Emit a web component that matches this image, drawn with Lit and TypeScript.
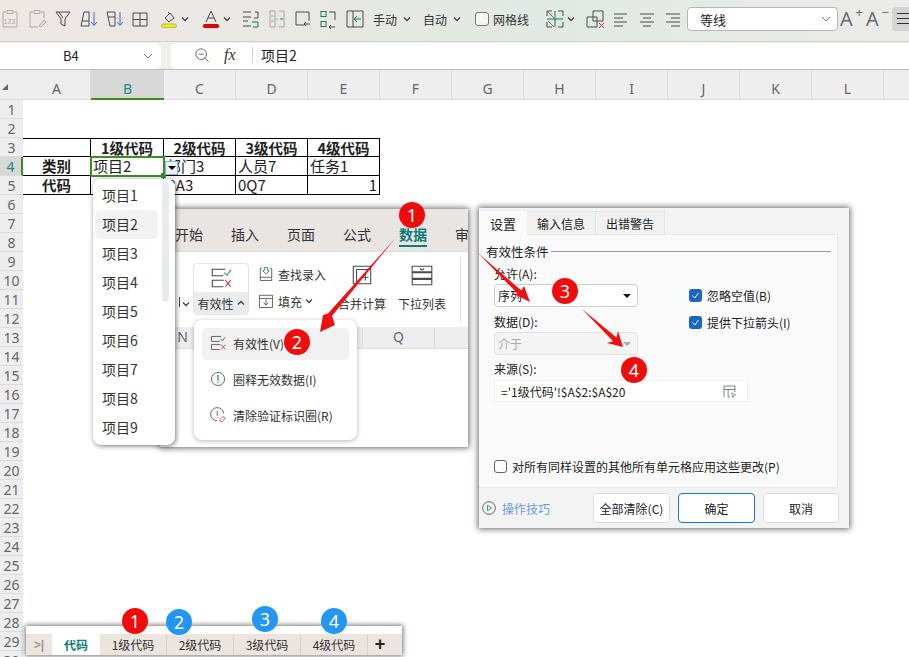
import { LitElement, html, css, svg } from "lit";
import { customElement } from "lit/decorators.js";

const ic = (body: unknown, size = 22) => html`<svg class="ic" width=${size} height=${size} viewBox="0 0 22 22" fill="none" stroke="#4a4a4a" stroke-width="1">${body}</svg>`;
const chev = html`<svg class="ic" width="8" height="6" viewBox="0 0 8 6" fill="none" stroke="#444" stroke-width="1.3"><path d="M1 1.5 4 4.5 7 1.5"/></svg>`;

const G = "#0f7d5f";
const tools: { c: number; w: number; t: unknown }[] = [
  { c: 10, w: 16, t: ic(svg`<g stroke="#aaa"><path d="M7 4H4v15h14V4h-3"/><path d="M8 2.5h6v3H8z"/><text x="4.5" y="16" font-size="7" fill="#aaa" stroke="none" font-family="Liberation Sans">123</text></g>`) },
  { c: 37, w: 16, t: ic(svg`<g stroke="#aaa"><path d="M7 4H4v15h8M15 4h3v6"/><path d="M8 2.5h6v3H8z"/><path d="M13 18l5-6 2 2-5 5z"/></g>`) },
  { c: 63, w: 16, t: ic(svg`<path d="M4 4h14l-5 7v7l-4-2v-5zM7 4l4 6"/>`) },
  { c: 89, w: 18, t: ic(svg`<path d="M6 4h5v14H3zM4 13h7"/><path d="M16 4v13M13 14l3 3.5 3-3.5" stroke="#2a6fe0"/>`) },
  { c: 115, w: 18, t: ic(svg`<path d="M3 4h8v14H6zM4 9h7"/><path d="M16 4v13M13 14l3 3.5 3-3.5" stroke="#2a6fe0"/>`) },
  { c: 140, w: 16, t: ic(svg`<path d="M4 5h14v13H4zM11 5v13M4 11.5h14"/>`) },
  { c: 169, w: 16, t: ic(svg`<path d="M7 10l5-5 4 5-5 4zM10 4l2 2"/><rect x="3.5" y="16" width="15" height="3.5" rx="1.5" fill="#f6ee00" stroke="#b8b85a"/>`) },
  { c: 185, w: 8, t: chev },
  { c: 211, w: 16, t: ic(svg`<path d="M6 14 11 3l5 11M8 10h6"/><rect x="3" y="16" width="16" height="4" rx="1.5" fill="#e00000" stroke="none"/>`) },
  { c: 227, w: 8, t: chev },
  { c: 250, w: 16, t: ic(svg`<path d="M4 4h8M4 9h8M4 18h8"/><path d="M16 4h3v6h-4M4 13h5" /><path d="M13 14h6v5h-5" stroke="${G}"/>`) },
  { c: 277, w: 16, t: ic(svg`<g stroke="#aaa"><path d="M4 3h5v16H4zM13 3h5v16h-5"/><path d="M5 8h3M5 13h3M10 11h2"/></g><path d="M14 11h3" stroke="${G}"/>`) },
  { c: 303, w: 16, t: ic(svg`<path d="M17 13V4H4v13h8"/><path d="M18 16h-6m2-2-2 2 2 2"/>`) },
  { c: 328, w: 16, t: ic(svg`<rect x="4" y="3.5" width="5" height="5" stroke="${G}"/><rect x="4" y="13.5" width="5" height="5" stroke="${G}"/><path d="M12 4h6v8M18 19h-6m2-2-2 2 2 2"/>`) },
  { c: 355, w: 16, t: ic(svg`<path d="M3 3h16v16H3zM9 3v16"/><path d="M17 11h-7m3-3-3 3 3 3" stroke="${G}"/>`) },
  { c: 385, w: 24, t: html`<span class="tt">手动</span>` },
  { c: 407, w: 8, t: chev },
  { c: 435, w: 24, t: html`<span class="tt">自动</span>` },
  { c: 457, w: 8, t: chev },
  { c: 482, w: 14, t: html`<span class="cb"></span>` },
  { c: 511, w: 36, t: html`<span class="tt">网格线</span>` },
  { c: 555, w: 16, t: ic(svg`<path d="M8 3H3v5M14 3h5v5M3 14v5h5M19 14v5h-5" /><path d="M3 11h16M11 3v16" stroke="${G}"/><path d="M4 4l6 6M4 13l6 6" stroke="#777"/>`) },
  { c: 571, w: 8, t: chev },
  { c: 595, w: 16, t: ic(svg`<path d="M3 9h10v10H3zM9 3h10v10H9z"/><path d="M15 15l5 5m0-5-5 5" stroke="#d0304a"/>`) },
  { c: 621, w: 16, t: ic(svg`<path d="M4 6h13M4 10h9M4 14h13M4 18h9"/>`) },
  { c: 647, w: 16, t: ic(svg`<path d="M4 6h14M7 10h8M4 14h14M7 18h8"/>`) },
  { c: 673, w: 16, t: ic(svg`<path d="M4 6h14M9 10h9M4 14h14M9 18h9"/>`) },
];

const colsTop = ["A", "B", "C", "D", "E", "F", "G", "H", "I", "J", "K", "L", "M"];
const table: Record<number, string[]> = {
  3: ["", "1级代码", "2级代码", "3级代码", "4级代码"],
  4: ["类别", "项目2", "部门3", "人员7", "任务1"],
  5: ["代码", "", "BA3", "0Q7", "1"],
};

@customElement("app-root")
export class AppRoot extends LitElement {
  static styles = css`
    :host { display: block; width: 909px; height: 657px; overflow: hidden; position: relative; background: #fff;
      font-family: "Noto Sans CJK SC", "Noto Sans", sans-serif; font-size: 13px; color: #222; }
    * { box-sizing: border-box; }
    .ic { display: block; flex: none; }
    .toolbar { height: 42px; display: flex; align-items: center; padding-bottom: 3px; border-bottom: 1px solid #cfcfcf; overflow: hidden;
      background: linear-gradient(90deg, #eee8e5 0%, #e8e8e4 35%, #e2e9e4 60%, #ebebe9 100%); }
    .slot { flex: none; display: flex; justify-content: center; align-items: center; }
    .tt { font-size: 12px; color: #333; white-space: nowrap; }
    .cb { width: 14px; height: 14px; border: 1px solid #777; border-radius: 3px; background: #f4f6f4; }
    .font { flex: none; width: 151px; height: 24px; margin-left: 6px; background: #fff; border: 1px solid #b5b5b5; border-radius: 4px;
      display: flex; align-items: center; justify-content: space-between; padding: 0 6px 0 12px; font-size: 13px; }
    .aa { flex: none; width: 26px; height: 26px; text-align: left; padding-left: 1px; font: 400 20px/26px "Open Sans", sans-serif; color: #666; position: relative; }
    .aa.first { margin-left: 1px; }
    .aa sup { position: absolute; top: -2px; right: 2px; font-size: 13px; line-height: 16px; }
    .sel-end { flex: none; width: 17px; height: 24px; margin-left: 1px; background: #d4d4d4; border-radius: 4px 0 0 4px; padding: 6px 0 0 5px; }
    .sel-end i { display: block; height: 1px; background: #333; margin-bottom: 4px; }

    .fbar { height: 28px; display: flex; gap: 10px; padding-top: 1px; background: #efefec; border-bottom: 1px solid #bdbdbd; }
    .name { width: 161px; background: #fff; border-radius: 0 6px 6px 0; display: flex; align-items: center; padding: 0 8px 1px 63px; justify-content: space-between; font-size: 13px; }
    .formula { flex: 1; background: #fff; border-radius: 6px 0 0 6px; display: flex; align-items: center; font-size: 14px; padding-bottom: 3px; }
    .fx { width: 16px; margin: 0 9px 0 13px; font: italic 16px "Liberation Serif", serif; color: #333; }
    .mag { margin-left: 22px; }
    .sep { width: 1px; height: 16px; background: #ccc; margin: 0 8px 0 3px; }

    .sheet { display: grid; grid-template-columns: 23px 68px 73px repeat(11, 72px); grid-template-rows: 30px repeat(30, 19px); }
    .corner { background: #eee; border-bottom: 1px solid #ddd; position: relative; }
    .corner::after { content: ""; position: absolute; left: 2px; top: 14px; border-style: solid; border-width: 0 0 6px 6px; border-color: transparent transparent #666 transparent; }
    .ch { background: #eee; border-right: 1px solid #dcdcdc; border-bottom: 1px solid #dcdcdc; padding-top: 9px; text-align: center; font-size: 14px; line-height: 20px; color: #666; font-family: "Noto Sans", sans-serif; }
    .ch.on { background: #d8d8d8; color: #1a8a8a; border-bottom: 2px solid #3f8c24; border-right: none; }
    .rh { background: #eee; border-bottom: 1px solid #dcdcdc; text-align: center; font-size: 14px; line-height: 19px; color: #666; font-family: "Noto Sans", sans-serif; }
    .rh.on { background: #d8d8d8; color: #1a8a8a; border-right: 2px solid #3f8c24; }
    .cell { white-space: nowrap; overflow-x: clip; overflow-y: visible; font-size: 15px; line-height: 18px; padding: 0 2px; color: #222; }
    .cell.b { border-right: 1px solid #000; border-bottom: 1px solid #000; }
    .cell.top { border-top: 1px solid #000; line-height: 18px; }
    .cell.c { text-align: center; font-weight: 700; font-size: 14.5px; }
    .cell.r { text-align: right; }
    .cell.sel { outline: 2px solid #3f8c24; outline-offset: -1px; overflow: visible; position: relative; z-index: 2; }
    .cell.sel::after { content: ""; position: absolute; right: -3px; bottom: -3px; width: 5px; height: 5px; background: #3f8c24; }
    .ddbtn { position: absolute; left: 165px; top: 161px; width: 13px; height: 14px; z-index: 3; background: #eaf0f7; border: 1px solid #8fb0d8; display: flex; justify-content: center; align-items: center; }
    .ddbtn::after { content: ""; border-style: solid; border-width: 4px 4px 0; border-color: #000 transparent transparent; }

    .list { position: absolute; z-index: 6; left: 93px; top: 179px; width: 82px; height: 266px; background: #fff; border-radius: 8px; padding: 2px; box-shadow: 1px 1px 5px rgba(0,0,0,.55); display: flex; flex-direction: column; }
    .list div.it { width: 63px; height: 29px; line-height: 29px; padding-left: 7px; font-size: 14px; color: #333; border-radius: 5px; flex: none; }
    .list div.it.on { background: #f2f2f2; }
    .scroll { position: absolute; left: 69px; top: 3px; width: 7px; height: 120px; background: #e8eaed; border-radius: 4px; }

    .win { position: absolute; z-index: 4; left: 160px; top: 209px; width: 308px; height: 238px; background: #fff; box-shadow: 0 0 6px 1px rgba(0,0,0,.6); display: flex; flex-direction: column; }
    .tabs { height: 43px; flex: none; background: #e9e5e3; border-bottom: 1px solid #ddd; padding: 16px 0 0 15px; display: flex; gap: 28px; overflow: hidden; font-size: 14px; line-height: 18px; color: #333; white-space: nowrap; }
    .tabs b { color: #0f7d73; height: 22px; border-bottom: 2px solid #0f7d73; flex: none; }
    .rib { height: 75px; flex: none; display: flex; align-items: flex-start; padding: 11px 0 0 15px; font-size: 12px; color: #333; }
    .stub { width: 18px; height: 52px; display: flex; align-items: flex-end; justify-content: flex-end; gap: 2px; padding: 0 3px 8px 0; }
    .stub i { width: 1px; height: 10px; background: #444; }
    .valid { width: 56px; height: 52px; border: 1px solid #e4e4e4; border-radius: 4px; display: flex; flex-direction: column; }
    .valid > div:first-child { height: 28px; display: flex; justify-content: center; align-items: center; }
    .valid > div:last-child { flex: 1; background: #ececec; display: flex; justify-content: center; align-items: center; gap: 3px; white-space: nowrap; }
    .small { width: 73px; margin-left: 8px; display: flex; flex-direction: column; gap: 7px; padding-top: 1px; }
    .small div { display: flex; align-items: center; gap: 3px; height: 20px; white-space: nowrap; }
    .big { width: 48px; height: 52px; margin-left: 8px; display: flex; flex-direction: column; align-items: center; justify-content: space-between; white-space: nowrap; padding-bottom: 3px; }
    .big.two { margin-left: 12px; }
    .vsep { width: 1px; height: 65px; margin: -6px 0 0 14px; background: #e0e0e0; }
    .hdr { height: 22px; flex: none; display: flex; background: #eee; border-bottom: 1px solid #dcdcdc; font: 14px/20px "Noto Sans", sans-serif; color: #667; }
    .hdr div { width: 72px; text-align: center; border-right: 1px solid #dcdcdc; }
    .hdr div.n { width: 59px; padding-right: 13px; }

    .menu { position: absolute; z-index: 5; left: 194px; top: 320px; width: 163px; height: 120px; background: #fff; border-radius: 8px; box-shadow: 0 1px 5px rgba(0,0,0,.3); padding: 8px; display: flex; flex-direction: column; gap: 4px; font-size: 12px; color: #333; }
    .menu div { height: 32px; display: flex; align-items: center; gap: 6px; padding: 0 0 2px 7px; border-radius: 5px; white-space: nowrap; }
    .menu div.on { background: #f1f1f1; }

    .dlg { position: absolute; z-index: 4; left: 479px; top: 208px; width: 370px; height: 320px; background: #f3f3f3; box-shadow: 0 0 6px 1px rgba(0,0,0,.6); display: flex; flex-direction: column; font-size: 12px; color: #222; }
    .dtabs { margin-top: 3px; height: 23px; flex: none; display: flex; }
    .dtabs span { height: 23px; width: 70px; background: #f1f1f1; border: 1px solid #e4e4e4; border-bottom: none; display: flex; align-items: center; justify-content: center; margin-left: -1px; }
    .dtabs span.on { width: 48px; margin-left: 0; background: #fafafa; border: none; height: 24px; position: relative; z-index: 1; font-size: 13px; }
    .panel { width: 359px; height: 254px; flex: none; background: #fafafa; border: 1px solid #e8e8e8; border-left: none; padding: 0 0 13px 15px; display: flex; flex-direction: column; }
    .group { display: flex; align-items: center; gap: 2px; height: 16px; margin: 8px 6px 0 -8px; font-size: 12.5px; }
    .group i { flex: 1; height: 1px; background: #999; }
    .cols { display: flex; gap: 51px; }
    .fields { width: 144px; flex: none; }
    .lb { height: 16px; line-height: 16px; white-space: nowrap; }
    .lb.gap { margin-top: 7px; }
    .lb.gap6 { margin-top: 6px; }
    .combo { height: 23px; margin-top: 2px; border: 1px solid #ccc; border-radius: 4px; background: #fff; display: flex; align-items: center; justify-content: space-between; padding: 0 5px 0 3px; }
    .combo::after { content: ""; border-style: solid; border-width: 4px 4px 0; border-color: #111 transparent transparent; margin-right: 1px; }
    .combo.off { background: #f4f4f4; color: #aaa; border-color: #e2e2e2; }
    .combo.off::after { border-top-color: #aaa; }
    .checks { padding-top: 28px; display: flex; flex-direction: column; gap: 11px; }
    .chk { display: flex; align-items: center; gap: 5px; height: 16px; white-space: nowrap; }
    .chk.end { margin-top: auto; }
    .box { width: 13px; height: 13px; border-radius: 3px; background: #1b66c0; display: flex; align-items: center; justify-content: center; flex: none; }
    .box.off { background: #fafafa; border: 1px solid #666; }
    .src { width: 254px; height: 22px; margin-top: 3px; background: #fff; border: 1px solid #efefef; display: flex; align-items: center; justify-content: space-between; padding: 0 10px 0 6px; }
    .foot { flex: 1; display: flex; align-items: center; padding: 0 10px 0 3px; }
    .link { color: #6a9be8; display: flex; align-items: center; gap: 6px; flex: none; width: 111px; }
    .btn { width: 77px; height: 30px; background: #fff; border: 1px solid #ddd; border-radius: 4px; display: flex; align-items: center; justify-content: center; margin-right: 8px; flex: none; white-space: nowrap; }
    .btn.pri { border-color: #1b74c8; }
    .btn.l { width: 76px; margin-right: 0; }

    .tabbar { position: absolute; z-index: 4; left: 26px; top: 626px; width: 376px; height: 29px; background: #fff; box-shadow: 0 0 5px 1px rgba(0,0,0,.55); padding-top: 8px; }
    .tabrow { height: 21px; display: flex; background: #ece4df; font-size: 12px; color: #333; align-items: stretch; }
    .tabrow span { width: 67px; display: flex; align-items: center; justify-content: center; border-right: 1px solid #d8d0cb; }
    .tabrow .nav { width: 26px; color: #999; font: 700 12px "Liberation Sans", sans-serif; border-right: none; }
    .tabrow .act { width: 48px; background: #fff; color: #0f7d73; font-weight: 700; border: none; }
    .tabrow .plus { width: 24px; border: none; font: 700 18px "Liberation Sans", sans-serif; color: #222; }

    .dot { position: absolute; z-index: 8; width: 26px; height: 26px; border-radius: 50%; background: #f00c0c; color: #fff; font: 18px/26px "Noto Sans", sans-serif; text-align: center; }
    .dot.blue { background: #2196f3; }
    .arrows { position: absolute; z-index: 7; left: 0; top: 0; pointer-events: none; }
  `;

  private dot(n: number, x: number, y: number, blue = false) {
    return html`<div class="dot ${blue ? "blue" : ""}" style="left:${x - 13}px;top:${y - 13}px">${n}</div>`;
  }

  private toolbar() {
    let end = 0;
    return tools.map((t) => {
      const ml = t.c - t.w / 2 - end;
      end = t.c + t.w / 2;
      return html`<div class="slot" style="width:${t.w}px;margin-left:${ml}px">${t.t}</div>`;
    });
  }

  private validIcon(s = 22) {
    return ic(svg`<path d="M15 3H3v6h10M14 13H3v6h10"/><path d="M14 6l2.5 2.5L20 3.5" stroke="#1f9a78"/><path d="M15 13l5 6m0-6-5 6" stroke="#d0304a"/>`, s);
  }

  private sheet() {
    const cells: unknown[] = [html`<div class="corner"></div>`];
    colsTop.forEach((c) => cells.push(html`<div class="ch ${c === "B" ? "on" : ""}">${c}</div>`));
    for (let r = 1; r <= 30; r++) {
      cells.push(html`<div class="rh ${r === 4 ? "on" : ""}">${r}</div>`);
      colsTop.forEach((_, i) => {
        const row = table[r];
        const v = row && i < 5 ? row[i] : "";
        const cls = ["cell"];
        if (row && i < 5) cls.push("b");
        if (r === 3 && i < 5) cls.push("top");
        if (r === 3 || (row && i === 0)) cls.push("c");
        if (r === 5 && i === 4) cls.push("r");
        if (r === 4 && i === 1) cls.push("sel");
        cells.push(html`<div class=${cls.join(" ")}>${v}</div>`);
      });
    }
    return html`<div class="sheet">${cells}</div>`;
  }

  render() {
    const tick = html`<svg width="9" height="9" viewBox="0 0 9 9" fill="none" stroke="#fff" stroke-width="1"><path d="M1.5 4.5 3.8 7 7.5 2"/></svg>`;
    return html`
      <div class="toolbar">
        ${this.toolbar()}
        <div class="font"><span>等线</span><svg width="10" height="6" viewBox="0 0 10 6" fill="none" stroke="#777"><path d="M1 1l4 4 4-4"/></svg></div>
        <div class="aa first">A<sup>+</sup></div>
        <div class="aa">A<sup>−</sup></div>
        <div class="sel-end"><i></i><i></i><i></i></div>
      </div>
      <div class="fbar">
        <div class="name"><span>B4</span><svg width="10" height="6" viewBox="0 0 10 6" fill="none" stroke="#777"><path d="M1 1l4 4 4-4"/></svg></div>
        <div class="formula">
          <span class="mag">${ic(svg`<circle cx="10" cy="10" r="6.5"/><path d="M7 10h6M15 15l4 4"/>`, 18)}</span>
          <span class="fx">fx</span><span class="sep"></span><span>项目2</span>
        </div>
      </div>
      ${this.sheet()}
      <div class="ddbtn"></div>

      <div class="list">
        ${[1, 2, 3, 4, 5, 6, 7, 8, 9].map((n) => html`<div class="it ${n === 2 ? "on" : ""}">项目${n}</div>`)}
        <div class="scroll"></div>
      </div>

      <div class="win">
        <div class="tabs"><span>开始</span><span>插入</span><span>页面</span><span>公式</span><b>数据</b><span>审</span></div>
        <div class="rib">
          <div class="stub"><i></i>${chev}</div>
          <div class="valid">
            <div>${this.validIcon(24)}</div>
            <div>有效性<svg width="8" height="6" viewBox="0 0 8 6" fill="none" stroke="#444" stroke-width="1.3"><path d="M1 4.5 4 1.5 7 4.5"/></svg></div>
          </div>
          <div class="small">
            <div>${ic(svg`<path d="M6 4H4v15h14V4h-2M4 15h14"/><path d="M9 3h4v4h2l-4 4-4-4h2z" stroke="${G}"/>`, 18)}查找录入</div>
            <div>${ic(svg`<path d="M3 4h16v15H3zM3 8h16"/><path d="M11 9v7m-3-3 3 3 3-3"/>`, 18)}填充${chev}</div>
          </div>
          <div class="big">${ic(svg`<path d="M3 3h16v16H3zM6 6h13M6 6v13M11 13h6M14 10v6"/>`, 24)}<span>合并计算</span></div>
          <div class="big two">${ic(svg`<path d="M2 3h18v5H2zM2 9h18v5H2zM2 15h18v5H2z"/><path d="M9 5l2 1.5L13 5" />`, 24)}<span>下拉列表</span></div>
          <div class="vsep"></div>
        </div>
        <div class="hdr"><div class="n">N</div><div></div><div></div><div>Q</div></div>
      </div>

      <div class="menu">
        <div class="on">${this.validIcon(18)}有效性(V)</div>
        <div>${ic(svg`<circle cx="11" cy="11" r="8"/><path d="M11 6v7M11 14.5v1.5" stroke="#2a6fe0" stroke-width="1.5"/>`, 18)}圈释无效数据(I)</div>
        <div>${ic(svg`<path d="M18 9a8 8 0 1 0-8 9"/><path d="M10 6v6M10 13.5v1"/><path d="M13 17l4-4 3 2-4 4h-2z" stroke="#d0304a"/>`, 18)}清除验证标识圈(R)</div>
      </div>

      <div class="dlg">
        <div class="dtabs"><span class="on">设置</span><span>输入信息</span><span>出错警告</span></div>
        <div class="panel">
          <div class="group">有效性条件<i></i></div>
          <div class="cols">
            <div class="fields">
              <div class="lb gap">允许(A):</div>
              <div class="combo">序列</div>
              <div class="lb gap">数据(D):</div>
              <div class="combo off">介于</div>
            </div>
            <div class="checks">
              <div class="chk"><span class="box">${tick}</span>忽略空值(B)</div>
              <div class="chk"><span class="box">${tick}</span>提供下拉箭头(I)</div>
            </div>
          </div>
          <div class="lb gap6">来源(S):</div>
          <div class="src"><span>='1级代码'!$A$2:$A$20</span>
            ${ic(svg`<path d="M3 19V3h16v9M3 8h16M9 8v11h3"/><path d="M14 13l6 3-3 1-1 3z" stroke="#1f9a78"/>`, 15)}</div>
          <div class="chk end"><span class="box off"></span>对所有同样设置的其他所有单元格应用这些更改(P)</div>
        </div>
        <div class="foot">
          <div class="link">
            <svg width="14" height="14" viewBox="0 0 14 14" fill="none" stroke="#666"><circle cx="7" cy="7" r="6.3"/><path d="M5.5 4.3 9.5 7l-4 2.7z" stroke="#2aa57e"/></svg>
            操作技巧
          </div>
          <div class="btn">全部清除(C)</div>
          <div class="btn pri">确定</div>
          <div class="btn l">取消</div>
        </div>
      </div>

      <div class="tabbar">
        <div class="tabrow">
          <span class="nav">&gt;|</span><span class="act">代码</span>
          <span>1级代码</span><span>2级代码</span><span>3级代码</span><span>4级代码</span><span class="plus">+</span>
        </div>
      </div>

      <svg class="arrows" width="909" height="657" fill="#f01010">
        <path d="M395.5 238 332 316 335 325 320 332 323 315 328 313.5Z"/>
        <path d="M478 253 521.3 290.4 524 286 530 302 512 293 517.9 294Z"/>
        <path d="M582 309 616.5 337.6 618 331 623 347 607 343 613.1 341.2Z"/>
      </svg>

      ${this.dot(1, 412, 215)}${this.dot(2, 297, 342)}${this.dot(3, 565, 291)}${this.dot(4, 634, 370)}
      ${this.dot(1, 135, 621)}${this.dot(2, 179, 622, true)}${this.dot(3, 265, 619, true)}${this.dot(4, 334, 621, true)}
    `;
  }
}
